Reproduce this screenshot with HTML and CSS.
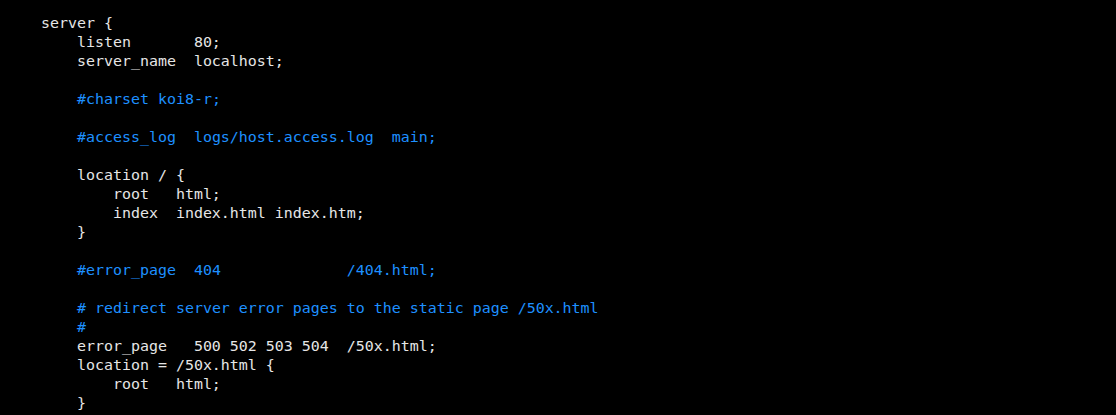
FILE: index.html
```html
<!DOCTYPE html>
<html>
<head>
<meta charset="utf-8">
<link rel="stylesheet" href="styles.css">
</head>
<body>
<pre class="term">server {
    listen       80;
    server_name  localhost;

    <span class="c">#charset koi8-r;</span>

    <span class="c">#access_log  logs/host.access.log  main;</span>

    location / {
        root   html;
        index  index.html index.htm;
    }

    <span class="c">#error_page  404              /404.html;</span>

    <span class="c"># redirect server error pages to the static page /50x.html</span>
    <span class="c">#</span>
    error_page   500 502 503 504  /50x.html;
    location = /50x.html {
        root   html;
    }
</pre>
</body>
</html>
```
FILE: styles.css
```css
html, body {
  margin: 0;
  background: #000;
  height: 100%;
  overflow: hidden;
}
.term {
  margin: 0;
  padding: 14px 0 0 41px;
  font-family: "DejaVu Sans Mono", monospace;
  font-size: 14.95px;
  line-height: 19px;
  color: #e6e6e6;
}
.c {
  color: #1e90ff;
}
```
